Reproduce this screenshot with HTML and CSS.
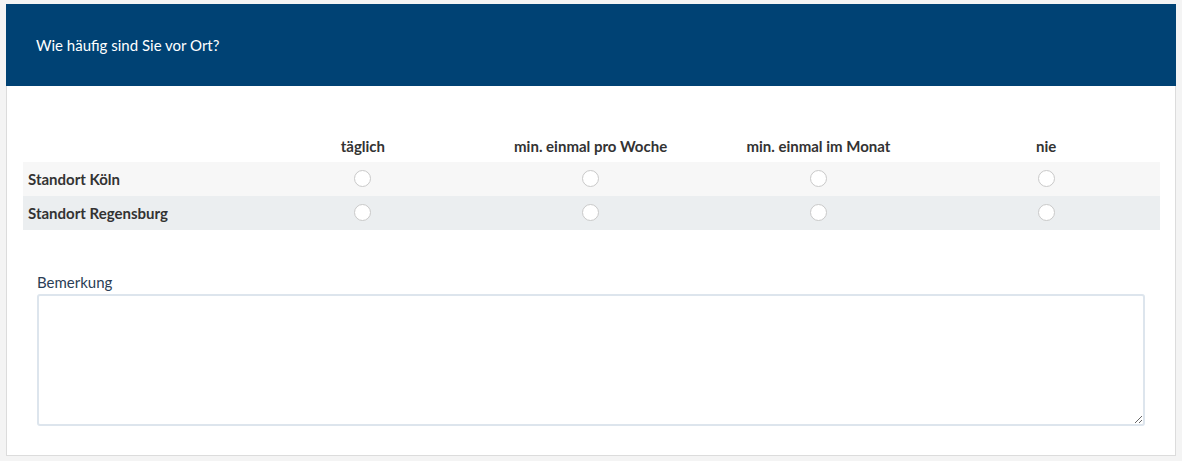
FILE: index.html
```html
<!DOCTYPE html>
<html lang="de">
<head>
<meta charset="utf-8">
<link rel="stylesheet" href="styles.css">
</head>
<body>
<div class="card">
  <div class="card-header">Wie häufig sind Sie vor Ort?</div>
  <div class="card-body">
    <table class="matrix">
      <thead>
        <tr>
          <th></th>
          <th>täglich</th>
          <th>min. einmal pro Woche</th>
          <th>min. einmal im Monat</th>
          <th>nie</th>
        </tr>
      </thead>
      <tbody>
        <tr class="odd">
          <td class="label">Standort Köln</td>
          <td><span class="radio"></span></td>
          <td><span class="radio"></span></td>
          <td><span class="radio"></span></td>
          <td><span class="radio"></span></td>
        </tr>
        <tr class="even">
          <td class="label">Standort Regensburg</td>
          <td><span class="radio"></span></td>
          <td><span class="radio"></span></td>
          <td><span class="radio"></span></td>
          <td><span class="radio"></span></td>
        </tr>
      </tbody>
    </table>
    <div class="remark">
      <label class="remark-label">Bemerkung</label>
      <textarea class="remark-input"></textarea>
    </div>
  </div>
</div>
</body>
</html>
```

FILE: styles.css
```css
html, body {
  margin: 0;
  padding: 0;
}
body {
  background: #f4f4f4;
  font-family: Lato, "Liberation Sans", sans-serif;
  color: #333;
  padding: 4px 6px 0 6px;
}
.card {
  width: 1170px;
  box-sizing: border-box;
  background: #fff;
  border: 1px solid #dcdcdc;
  border-top: none;
}
.card-header {
  background: #004274;
  color: #fff;
  height: 82px;
  margin: 0 -1px;
  padding: 0 30px;
  display: flex;
  align-items: center;
  font-size: 15px;
}
.card-body {
  padding: 44px 15px 29px 16px;
}
.matrix {
  width: 1137px;
  border-collapse: collapse;
  table-layout: fixed;
}
.matrix thead th:first-child {
  width: 226px;
}
.matrix th {
  font-weight: bold;
  font-size: 15px;
  color: #333;
  text-align: center;
  height: 32px;
  padding: 0;
}
.matrix td {
  height: 34px;
  padding: 0;
  text-align: center;
  vertical-align: middle;
}
.matrix td.label {
  text-align: left;
  padding-left: 5px;
  font-weight: bold;
  font-size: 15px;
  color: #333;
}
.odd { background: #f7f7f7; }
.even { background: #ebeef0; }
.radio {
  display: block;
  margin: 0 auto;
  width: 17px;
  height: 17px;
  box-sizing: border-box;
  border: 1px solid #c9c9c9;
  border-radius: 50%;
  background: #fff;
  position: relative;
  top: -1px;
}
.remark {
  margin: 44px 15px 0 14px;
  display: flex;
  flex-direction: column;
}
.remark-label {
  font-size: 15px;
  color: #2a3d55;
  line-height: 17px;
  margin-bottom: 3px;
}
.remark-input {
  height: 132px;
  box-sizing: border-box;
  border: 2px solid #dde5ed;
  border-radius: 3px;
  resize: vertical;
  font-family: inherit;
}
```
